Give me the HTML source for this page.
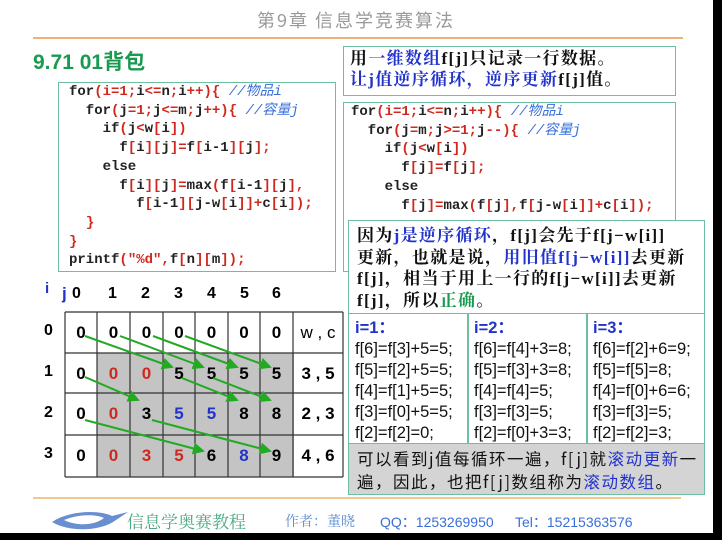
<!DOCTYPE html>
<html><head><meta charset="utf-8"><style>
*{margin:0;padding:0;box-sizing:border-box}
body{width:722px;height:540px;background:#fff;position:relative;overflow:hidden;font-family:"Liberation Sans","Noto Sans CJK SC",sans-serif}
.a{position:absolute;white-space:nowrap}
.code{font-family:"Liberation Mono","Noto Sans CJK SC",monospace;font-weight:bold;font-size:14px;color:#222;line-height:18.7px}
.r{color:#d0281e}.c{color:#3a6fd8;font-style:italic;font-weight:normal}
.box{position:absolute;border:1.5px solid #6cc0a0;background:#fff}
.ser{font-family:"Liberation Serif","Noto Serif CJK SC",serif;font-size:17px;letter-spacing:1.3px;color:#111;font-weight:bold}
.bl{color:#2233cc}.gr{color:#1a9a50}
.cell{position:absolute;text-align:center;font-weight:bold;font-size:17px;line-height:41px}
.t{font-size:16.5px;line-height:21px;color:#111}
</style></head><body>
<div class="a" style="left:257px;top:7px;font-size:18px;letter-spacing:2px;color:#999;font-family:'Noto Sans CJK SC',sans-serif">第9章 信息学竞赛算法</div>
<div class="a" style="left:33px;top:37px;width:650px;height:2px;background:#f0b078"></div>
<div class="a" style="left:33px;top:46px;font-size:21px;font-weight:bold;color:#1a9a50">9.71 01背包</div>

<div class="box" style="left:58px;top:82px;width:278px;height:190px"></div>
<div class="a code" style="left:69px;top:83px">for<span class="r">(i=1;</span>i<span class="r">&lt;=</span>n<span class="r">;</span>i<span class="r">++){</span> <span class="c">//物品i</span><br>&nbsp;&nbsp;for<span class="r">(</span>j<span class="r">=1;</span>j<span class="r">&lt;=</span>m<span class="r">;</span>j<span class="r">++){</span> <span class="c">//容量j</span><br>&nbsp;&nbsp;&nbsp;&nbsp;if<span class="r">(</span>j<span class="r">&lt;</span>w<span class="r">[</span>i<span class="r">])</span><br>&nbsp;&nbsp;&nbsp;&nbsp;&nbsp;&nbsp;f<span class="r">[</span>i<span class="r">][</span>j<span class="r">]=</span>f<span class="r">[</span>i-1<span class="r">][</span>j<span class="r">];</span><br>&nbsp;&nbsp;&nbsp;&nbsp;else<br>&nbsp;&nbsp;&nbsp;&nbsp;&nbsp;&nbsp;f<span class="r">[</span>i<span class="r">][</span>j<span class="r">]=</span>max<span class="r">(</span>f<span class="r">[</span>i-1<span class="r">][</span>j<span class="r">],</span><br>&nbsp;&nbsp;&nbsp;&nbsp;&nbsp;&nbsp;&nbsp;&nbsp;f<span class="r">[</span>i-1<span class="r">][</span>j-w<span class="r">[</span>i<span class="r">]]+</span>c<span class="r">[</span>i<span class="r">]);</span><br>&nbsp;&nbsp;<span class="r">}</span><br><span class="r">}</span><br>printf<span class="r">("%d",</span>f<span class="r">[</span>n<span class="r">][</span>m<span class="r">]);</span></div>

<div class="box" style="left:343px;top:46px;width:333px;height:50px"></div>
<div class="a ser" style="left:350px;top:48px;line-height:21px">用<span class="bl">一维数组</span>f[j]只记录一行数据。<br><span class="bl">让j值逆序循环，逆序更新</span>f[j]值。</div>

<div class="box" style="left:343px;top:102px;width:333px;height:170px"></div>
<div class="a code" style="left:351px;top:103px">for<span class="r">(i=1;</span>i<span class="r">&lt;=</span>n<span class="r">;</span>i<span class="r">++){</span> <span class="c">//物品i</span><br>&nbsp;&nbsp;for<span class="r">(</span>j<span class="r">=</span>m<span class="r">;</span>j<span class="r">&gt;=1;</span>j<span class="r">--){</span> <span class="c">//容量j</span><br>&nbsp;&nbsp;&nbsp;&nbsp;if<span class="r">(</span>j<span class="r">&lt;</span>w<span class="r">[</span>i<span class="r">])</span><br>&nbsp;&nbsp;&nbsp;&nbsp;&nbsp;&nbsp;f<span class="r">[</span>j<span class="r">]=</span>f<span class="r">[</span>j<span class="r">];</span><br>&nbsp;&nbsp;&nbsp;&nbsp;else<br>&nbsp;&nbsp;&nbsp;&nbsp;&nbsp;&nbsp;f<span class="r">[</span>j<span class="r">]=</span>max<span class="r">(</span>f<span class="r">[</span>j<span class="r">],</span>f<span class="r">[</span>j-w<span class="r">[</span>i<span class="r">]]+</span>c<span class="r">[</span>i<span class="r">]);</span></div>

<div class="box" style="left:348px;top:220px;width:357px;height:94px"></div>
<div class="a ser" style="left:357px;top:225px;line-height:21.5px">因为<span class="bl">j是逆序循环</span>，f[j]会先于f[j−w[i]]<br>更新，也就是说，<span class="bl">用旧值f[j−w[i]]</span>去更新<br>f[j]，相当于用上一行的f[j−w[i]]去更新<br>f[j]，所以<span class="gr">正确</span>。</div>

<div class="box" style="left:348px;top:313px;width:357px;height:131px"></div>
<div class="a" style="left:467px;top:314px;width:1.5px;height:129px;background:#6cc0a0"></div>
<div class="a" style="left:586px;top:314px;width:1.5px;height:129px;background:#6cc0a0"></div>
<div class="a t" style="left:355px;top:318px"><b class="bl">i=1：</b><br>f[6]=f[3]+5=5;<br>f[5]=f[2]+5=5;<br>f[4]=f[1]+5=5;<br>f[3]=f[0]+5=5;<br>f[2]=f[2]=0;</div>
<div class="a t" style="left:474px;top:318px"><b class="bl">i=2：</b><br>f[6]=f[4]+3=8;<br>f[5]=f[3]+3=8;<br>f[4]=f[4]=5;<br>f[3]=f[3]=5;<br>f[2]=f[0]+3=3;</div>
<div class="a t" style="left:593px;top:318px"><b class="bl">i=3：</b><br>f[6]=f[2]+6=9;<br>f[5]=f[5]=8;<br>f[4]=f[0]+6=6;<br>f[3]=f[3]=5;<br>f[2]=f[2]=3;</div>

<div class="box" style="left:348px;top:443px;width:357px;height:52px;background:#d4d4d4"></div>
<div class="a" style="left:357px;top:447px;font-size:16.5px;letter-spacing:1.5px;line-height:23px;color:#111;font-family:'Noto Sans CJK SC',sans-serif">可以看到j值每循环一遍，f[j]就<span class="bl">滚动更新</span>一<br>遍，因此，也把f[j]数组称为<span class="bl">滚动数组</span>。</div>

<!-- grid -->
<div class="a" style="left:97px;top:353px;width:197px;height:124px;background:#c4c4c4"></div>
<svg class="a" style="left:0;top:0" width="722" height="540">
<g stroke="#333" stroke-width="1.2" fill="none">
<line x1="65" y1="312" x2="343" y2="312"/><line x1="65" y1="353" x2="343" y2="353"/><line x1="65" y1="393" x2="343" y2="393"/><line x1="65" y1="435" x2="343" y2="435"/><line x1="65" y1="477" x2="343" y2="477"/>
<line x1="65" y1="312" x2="65" y2="477"/><line x1="97" y1="312" x2="97" y2="477"/><line x1="130" y1="312" x2="130" y2="477"/><line x1="163" y1="312" x2="163" y2="477"/><line x1="195" y1="312" x2="195" y2="477"/><line x1="228" y1="312" x2="228" y2="477"/><line x1="260" y1="312" x2="260" y2="477"/><line x1="293" y1="312" x2="293" y2="477"/><line x1="343" y1="312" x2="343" y2="477"/>
</g>
</svg>
<div class="a" style="left:62px;top:284px;font-weight:bold;font-size:17px;color:#2233cc">j</div>
<div class="a" style="left:45px;top:280px;font-weight:bold;font-size:15px;color:#2233cc">i</div>
<div class="a" style="left:72px;top:285px;font-weight:bold;font-size:16px">0</div>
<div class="a" style="left:108px;top:285px;font-weight:bold;font-size:16px">1</div>
<div class="a" style="left:141px;top:285px;font-weight:bold;font-size:16px">2</div>
<div class="a" style="left:174px;top:285px;font-weight:bold;font-size:16px">3</div>
<div class="a" style="left:207px;top:285px;font-weight:bold;font-size:16px">4</div>
<div class="a" style="left:240px;top:285px;font-weight:bold;font-size:16px">5</div>
<div class="a" style="left:272px;top:285px;font-weight:bold;font-size:16px">6</div>
<div class="a" style="left:44px;top:322px;font-weight:bold;font-size:16px">0</div>
<div class="a" style="left:44px;top:363px;font-weight:bold;font-size:16px">1</div>
<div class="a" style="left:44px;top:404px;font-weight:bold;font-size:16px">2</div>
<div class="a" style="left:44px;top:445px;font-weight:bold;font-size:16px">3</div>

<div class="cell" style="left:65px;top:312px;width:32px">0</div><div class="cell" style="left:97px;top:312px;width:33px">0</div><div class="cell" style="left:130px;top:312px;width:33px">0</div><div class="cell" style="left:163px;top:312px;width:32px">0</div><div class="cell" style="left:195px;top:312px;width:33px">0</div><div class="cell" style="left:228px;top:312px;width:32px">0</div><div class="cell" style="left:260px;top:312px;width:33px">0</div><div class="cell" style="left:293px;top:312px;width:50px;font-weight:normal">w , c</div>
<div class="cell" style="left:65px;top:353px;width:32px">0</div><div class="cell r" style="left:97px;top:353px;width:33px">0</div><div class="cell r" style="left:130px;top:353px;width:33px">0</div><div class="cell" style="left:163px;top:353px;width:32px">5</div><div class="cell" style="left:195px;top:353px;width:33px">5</div><div class="cell" style="left:228px;top:353px;width:32px">5</div><div class="cell" style="left:260px;top:353px;width:33px">5</div><div class="cell" style="left:293px;top:353px;width:50px">3 , 5</div>
<div class="cell" style="left:65px;top:393px;width:32px">0</div><div class="cell r" style="left:97px;top:393px;width:33px">0</div><div class="cell" style="left:130px;top:393px;width:33px">3</div><div class="cell bl" style="left:163px;top:393px;width:32px">5</div><div class="cell bl" style="left:195px;top:393px;width:33px">5</div><div class="cell" style="left:228px;top:393px;width:32px">8</div><div class="cell" style="left:260px;top:393px;width:33px">8</div><div class="cell" style="left:293px;top:393px;width:50px">2 , 3</div>
<div class="cell" style="left:65px;top:435px;width:32px">0</div><div class="cell r" style="left:97px;top:435px;width:33px">0</div><div class="cell r" style="left:130px;top:435px;width:33px">3</div><div class="cell r" style="left:163px;top:435px;width:32px">5</div><div class="cell" style="left:195px;top:435px;width:33px">6</div><div class="cell bl" style="left:228px;top:435px;width:32px">8</div><div class="cell" style="left:260px;top:435px;width:33px">9</div><div class="cell" style="left:293px;top:435px;width:50px">4 , 6</div>

<svg class="a" style="left:0;top:0" width="722" height="540">
<defs><marker id="m" markerWidth="6" markerHeight="6" refX="5" refY="3" orient="auto"><path d="M0,0 L6,3 L0,6 z" fill="#22aa22"/></marker></defs>
<g stroke="#22aa22" stroke-width="2" fill="none" marker-end="url(#m)">
<line x1="85" y1="336" x2="172" y2="367"/><line x1="120" y1="336" x2="203" y2="367"/><line x1="153" y1="336" x2="237" y2="367"/><line x1="185" y1="336" x2="270" y2="367"/>
<line x1="85" y1="377" x2="138" y2="400"/><line x1="182" y1="378" x2="237" y2="400"/><line x1="213" y1="378" x2="270" y2="400"/>
<line x1="85" y1="420" x2="203" y2="451"/><line x1="152" y1="420" x2="270" y2="451"/>
</g></svg>

<div class="a" style="left:33px;top:497px;width:648px;height:2px;background:#f0c890"></div>
<svg class="a" style="left:50px;top:506px" width="80" height="26"><path d="M2,16 C20,4 50,4 62,10 L78,6 L66,14 C50,26 18,26 2,16z" fill="#6a8fd0"/><path d="M14,14 C28,8 46,8 54,12 C44,20 26,20 14,14z" fill="#fff"/></svg>
<div class="a" style="left:127px;top:508px;font-size:17px;color:#4aaa80;font-family:'Noto Serif CJK SC',serif">信息学奥赛教程</div>
<div class="a" style="left:285px;top:511px;font-size:14px;color:#5a8ad0;font-family:'Noto Serif CJK SC',serif">作者：董晓</div>
<div class="a" style="left:380px;top:512px;font-size:14px;color:#3a6fd8">QQ：1253269950</div>
<div class="a" style="left:515px;top:512px;font-size:14px;color:#3a6fd8">Tel：15215363576</div>

<div class="a" style="left:713px;top:0;width:9px;height:540px;background:#000"></div>
<div class="a" style="left:0;top:533px;width:722px;height:7px;background:#000"></div>
</body></html>
